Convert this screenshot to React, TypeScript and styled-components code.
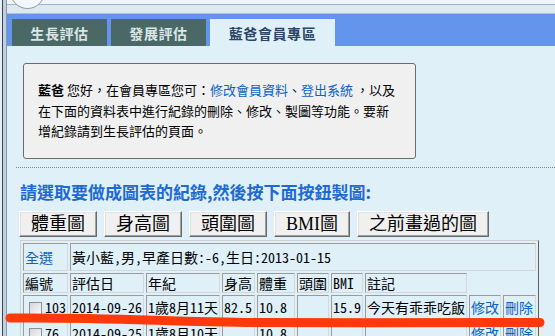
import React from "react";
import styled, { createGlobalStyle } from "styled-components";

const cjk = `"Noto Sans CJK TC", "Noto Sans", sans-serif`;
const mono = `"Noto Sans Mono CJK TC", "Noto Sans CJK TC", monospace`;

const GlobalStyle = createGlobalStyle`
  html, body {
    margin: 0;
    padding: 0;
  }
  body {
    width: 555px;
    height: 336px;
    overflow: hidden;
    background: #dff0f8;
    font-family: ${cjk};
  }
`;

const Frame = styled.div`
  position: relative;
  display: flex;
  width: 555px;
  height: 336px;
  overflow: hidden;
`;

const SideEdge = styled.div`
  flex: 0 0 7px;
  background: linear-gradient(
    to right,
    #e6eef6 0 2px,
    #3d444c 2px 3px,
    #bfd0e0 3px 6px,
    #8a99a8 6px 7px
  );
`;

const Main = styled.div`
  flex: 1;
  display: flex;
  flex-direction: column;
  min-width: 0;
  min-height: 0;
`;

const AddressStrip = styled.div`
  position: relative;
  flex: 0 0 14px;
  background: linear-gradient(
    to bottom,
    #eef4fa 0 4px,
    #a6b4c2 4px 5px,
    #dce8f4 5px 13px,
    #b2c0ce 13px 14px
  );
`;

const BackButton = styled.svg`
  position: absolute;
  left: 3px;
  top: -26px;
`;

const TabBar = styled.nav`
  flex: 0 0 32px;
  display: flex;
  align-items: flex-end;
  gap: 4px;
  padding-left: 5px;
  background: #6495ed;
`;

const Tab = styled.div<{ $active?: boolean; $w: number }>`
  width: ${(p) => p.$w}px;
  height: 27px;
  display: flex;
  align-items: center;
  justify-content: center;
  background: ${(p) => (p.$active ? "#dff0f8" : "#4a6866")};
  color: ${(p) => (p.$active ? "#2b4468" : "#dce5e5")};
  font: bold 14px/1 ${cjk};
  letter-spacing: 0.6px;
`;

const Content = styled.main`
  flex: 1 0 auto;
  background: #dff0f8;
  padding: 17px 0 0 9px;
`;

const Notice = styled.div`
  width: 393px;
  height: 96px;
  box-sizing: border-box;
  margin-left: 7px;
  border: 1px solid #6b6b6b;
  border-radius: 3px;
  background: #f0f0f0;
  padding: 16px 0 0 14px;
  font: 13px/20.5px ${cjk};
  color: #000;
  white-space: nowrap;
`;

const Link = styled.a`
  color: #0b62c4;
  text-decoration: none;
  cursor: pointer;
`;

const Divider = styled.hr`
  margin: 8px 0 0 0;
  border: 0;
  border-top: 1px dotted #8a8a8a;
  height: 0;
`;

const Heading = styled.h3`
  margin: 14px 0 0 4px;
  font: bold 17px/20px ${cjk};
  color: #1d6bd2;
`;

const ButtonRow = styled.div`
  display: flex;
  gap: 7px;
  margin: 9px 0 0 3px;
`;

const ChartButton = styled.button`
  height: 26px;
  padding: 0 11px;
  margin: 0;
  background: #f0f0f0;
  border: 1px solid;
  border-color: #ffffff #696969 #696969 #ffffff;
  box-shadow: inset -1px -1px #a0a0a0, inset 1px 1px #e3e3e3;
  font: 18px/1 "Liberation Serif", ${cjk};
  color: #000;
  white-space: nowrap;
`;

const Records = styled.table`
  margin: 3px 0 0 4px;
  width: 519px;
  table-layout: fixed;
  border-collapse: separate;
  border-spacing: 2px;
  border: 1px solid;
  border-color: #d0d0d0 #5e5e5e #5e5e5e #d0d0d0;
  font: 14px/1 ${mono};
  color: #000;
`;

const Col = styled.col<{ $w: number }>`
  width: ${(p) => p.$w}px;
`;

const Row = styled.tr<{ $h: number }>`
  height: ${(p) => p.$h}px;
`;

const Cell = styled.td`
  box-sizing: border-box;
  padding: 0 1px;
  border: 1px solid;
  border-color: #9a9a9a #d6d6d6 #d6d6d6 #9a9a9a;
  vertical-align: middle;
  white-space: nowrap;
  overflow: hidden;
  text-align: left;
`;

const Tick = styled.input`
  appearance: none;
  width: 13px;
  height: 13px;
  margin: 0 3px 0 4px;
  vertical-align: -2px;
  border: 1px solid #8e8f8f;
  background: linear-gradient(135deg, #d6d6d6, #fbfbfb);
`;

const MarkerLayer = styled.svg`
  position: absolute;
  left: 0;
  top: 0;
  pointer-events: none;
`;

type RecordRow = {
  id: string;
  date: string;
  age: string;
  height: string;
  weight: string;
  head: string;
  bmi: string;
  note: string;
};

const rows: RecordRow[] = [
  {
    id: "103",
    date: "2014-09-26",
    age: "1歲8月11天",
    height: "82.5",
    weight: "10.8",
    head: "",
    bmi: "15.9",
    note: "今天有乖乖吃飯",
  },
  {
    id: "76",
    date: "2014-09-25",
    age: "1歲8月10天",
    height: "",
    weight: "10.8",
    head: "",
    bmi: "",
    note: "",
  },
];

const colWidths = [45, 74, 74, 33, 38, 32, 32, 102, 32, 33];
const headers = ["編號", "評估日", "年紀", "身高", "體重", "頭圍", "BMI", "註記"];
const charts = ["體重圖", "身高圖", "頭圍圖", "BMI圖", "之前畫過的圖"];

const App = () => {
  return (
    <>
      <GlobalStyle />
      <Frame>
        <SideEdge />
        <Main>
          <AddressStrip>
            <BackButton width="35" height="35" viewBox="0 0 35 35">
              <circle cx="17.5" cy="17.5" r="17" fill="#f4f8fc" stroke="#8a98a8" />
            </BackButton>
          </AddressStrip>
          <TabBar>
            <Tab $w={95}>生長評估</Tab>
            <Tab $w={95}>發展評估</Tab>
            <Tab $w={125} $active>
              藍爸會員專區
            </Tab>
          </TabBar>
          <Content>
            <Notice>
              <b>藍爸</b> 您好，在會員專區您可：<Link>修改會員資料</Link>、
              <Link>登出系統</Link> ，以及
              <br />
              在下面的資料表中進行紀錄的刪除、修改、製圖等功能。要新
              <br />
              增紀錄請到生長評估的頁面。
            </Notice>
            <Divider />
            <Heading>請選取要做成圖表的紀錄,然後按下面按鈕製圖:</Heading>
            <ButtonRow>
              {charts.map((c) => (
                <ChartButton key={c}>{c}</ChartButton>
              ))}
            </ButtonRow>
            <Records>
              <colgroup>
                {colWidths.map((w, i) => (
                  <Col key={i} $w={w} />
                ))}
              </colgroup>
              <tbody>
                <Row $h={28}>
                  <Cell>
                    <Link>全選</Link>
                  </Cell>
                  <Cell colSpan={9}>黃小藍,男,早產日數:-6,生日:2013-01-15</Cell>
                </Row>
                <Row $h={20}>
                  {headers.map((h) => (
                    <Cell key={h}>{h}</Cell>
                  ))}
                </Row>
                {rows.map((r) => (
                  <Row $h={24} key={r.id}>
                    <Cell>
                      <Tick type="checkbox" />
                      {r.id}
                    </Cell>
                    <Cell>{r.date}</Cell>
                    <Cell>{r.age}</Cell>
                    <Cell>{r.height}</Cell>
                    <Cell>{r.weight}</Cell>
                    <Cell>{r.head}</Cell>
                    <Cell>{r.bmi}</Cell>
                    <Cell>{r.note}</Cell>
                    <Cell>
                      <Link>修改</Link>
                    </Cell>
                    <Cell>
                      <Link>刪除</Link>
                    </Cell>
                  </Row>
                ))}
              </tbody>
            </Records>
          </Content>
        </Main>
        <MarkerLayer width="555" height="336" viewBox="0 0 555 336">
          <path
            d="M10 318 C 110 317, 170 322, 260 322.5 S 470 323, 540 322.5"
            fill="none"
            stroke="#ff3a0a"
            strokeWidth="9"
            strokeLinecap="round"
          />
        </MarkerLayer>
      </Frame>
    </>
  );
};

export default App;
